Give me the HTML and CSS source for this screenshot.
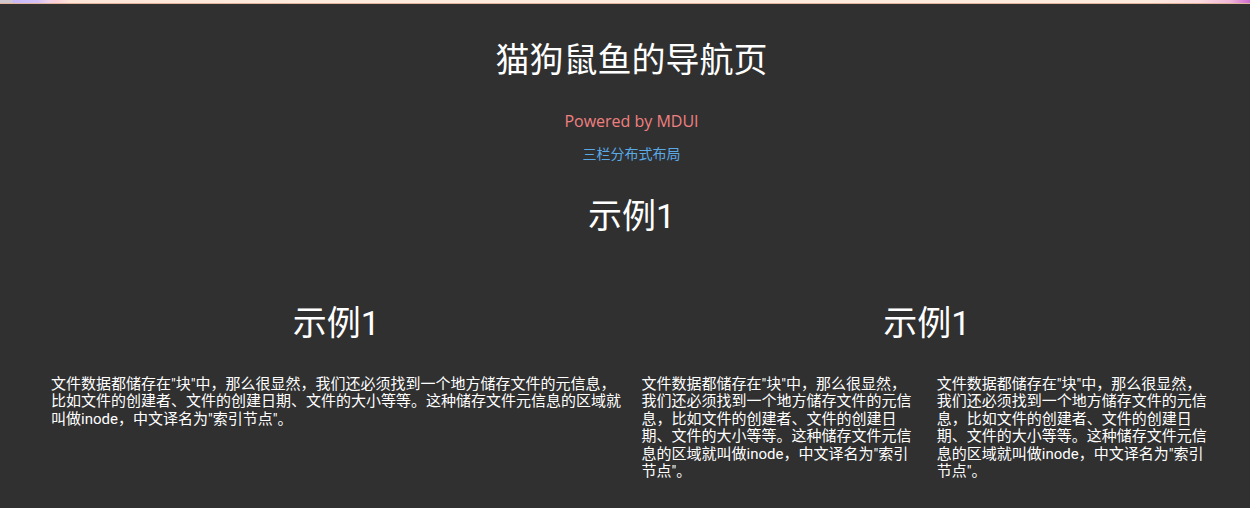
FILE: index.html
```html
<!DOCTYPE html>
<html lang="zh-CN">
<head>
<meta charset="utf-8">
<title>猫狗鼠鱼的导航页</title>
<link rel="stylesheet" href="styles.css">
</head>
<body>
<div class="strip"></div>
<main class="page">
  <header class="header">
    <h1 class="title">猫狗鼠鱼的导航页</h1>
    <p class="powered">Powered by MDUI</p>
    <p class="subtitle">三栏分布式布局</p>
    <h2 class="section-title">示例1</h2>
  </header>
  <section class="row">
    <div class="half">
      <h3 class="col-title">示例1</h3>
      <p class="text">文件数据都储存在"块"中，那么很显然，我们还必须找到一个地方储存文件的元信息，比如文件的创建者、文件的创建日期、文件的大小等等。这种储存文件元信息的区域就叫做inode，中文译名为"索引节点"。</p>
    </div>
    <div class="half">
      <h3 class="col-title">示例1</h3>
      <div class="subrow">
        <p class="text">文件数据都储存在"块"中，那么很显然，我们还必须找到一个地方储存文件的元信息，比如文件的创建者、文件的创建日期、文件的大小等等。这种储存文件元信息的区域就叫做inode，中文译名为"索引节点"。</p>
        <p class="text">文件数据都储存在"块"中，那么很显然，我们还必须找到一个地方储存文件的元信息，比如文件的创建者、文件的创建日期、文件的大小等等。这种储存文件元信息的区域就叫做inode，中文译名为"索引节点"。</p>
      </div>
    </div>
  </section>
</main>
</body>
</html>
```

FILE: styles.css
```css
html, body {
  margin: 0;
  padding: 0;
  background: #303030;
  color: #fff;
  font-family: Roboto, "Noto Sans CJK SC", sans-serif;
  overflow: hidden;
}

.strip {
  height: 3px;
  border-bottom: 1px solid #e2b49e;
  background: linear-gradient(90deg,
    #cfc9cf 0px, #cfc9cf 12px,
    #c8b8fb 13px, #d4c2f6 38px,
    #eed2ec 48px, #fbd0da 56px,
    #fde6d8 70px, #fdebdd 300px,
    #fdebdd 1150px, #fbdbe0 1200px,
    #f0b8d8 1230px, #d26ad2 1250px);
}

.page {
  padding: 0 28px 0 41px;
}

.header {
  display: flex;
  flex-direction: column;
  align-items: center;
}

.title {
  margin: 36px 0 0;
  font-size: 34px;
  line-height: 40px;
  font-weight: 400;
}

.powered {
  margin: 31px 0 0;
  font-size: 16px;
  line-height: 20px;
  color: #f08080;
  font-family: "Open Sans", Roboto, sans-serif;
}

.subtitle {
  margin: 13px 0 0;
  font-size: 14px;
  line-height: 20px;
  color: #5aaae8;
}

.section-title {
  margin: 32px 0 0;
  font-size: 34px;
  line-height: 40px;
  font-weight: 400;
}

.row {
  display: grid;
  grid-template-columns: 1fr 1fr;
  margin-top: 67px;
}

.half {
  padding: 0 10px;
  display: flex;
  flex-direction: column;
}

.col-title {
  margin: 0;
  text-align: center;
  font-size: 34px;
  line-height: 40px;
  font-weight: 400;
}

.subrow {
  display: grid;
  grid-template-columns: 1fr 1fr;
  column-gap: 20px;
}

.text {
  margin: 33px 0 0;
  font-size: 15px;
  line-height: 17.4px;
}
```
